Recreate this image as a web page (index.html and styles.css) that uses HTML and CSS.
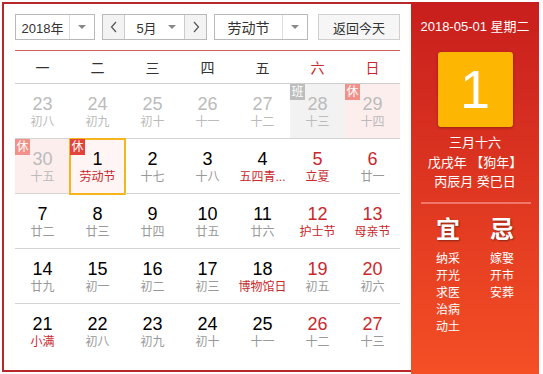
FILE: index.html
```html
<!DOCTYPE html>
<html lang="zh-CN">
<head>
  <meta charset="UTF-8">
  <title>万年历</title>
  <link rel="stylesheet" href="styles.css">
</head>
<body>
  <div class="calendar">
    <div class="main">
      <div class="toolbar">
        <div class="select year">
          <span class="value">2018年</span>
          <span class="arrow"></span>
        </div>
        <div class="select month">
          <span class="nav">
            <svg width="8" height="12" viewBox="0 0 8 12"><polyline points="6,1 1.5,6 6,11" fill="none" stroke="#555" stroke-width="1.2"/></svg>
          </span>
          <span class="value">5月</span>
          <span class="arrow plain"></span>
          <span class="nav next">
            <svg width="8" height="12" viewBox="0 0 8 12"><polyline points="2,1 6.5,6 2,11" fill="none" stroke="#555" stroke-width="1.2"/></svg>
          </span>
        </div>
        <div class="select holiday">
          <span class="value">劳动节</span>
          <span class="arrow"></span>
        </div>
        <button class="today">返回今天</button>
      </div>

      <div class="weekdays">
        <span>一</span><span>二</span><span>三</span><span>四</span><span>五</span>
        <span class="weekend">六</span><span class="weekend">日</span>
      </div>

      <div class="days">
        <div class="cell other"><span class="num">23</span><span class="lunar">初八</span></div>
        <div class="cell other"><span class="num">24</span><span class="lunar">初九</span></div>
        <div class="cell other"><span class="num">25</span><span class="lunar">初十</span></div>
        <div class="cell other"><span class="num">26</span><span class="lunar">十一</span></div>
        <div class="cell other"><span class="num">27</span><span class="lunar">十二</span></div>
        <div class="cell other work"><i class="badge">班</i><span class="num">28</span><span class="lunar">十三</span></div>
        <div class="cell other rest"><i class="badge">休</i><span class="num">29</span><span class="lunar">十四</span></div>

        <div class="cell other rest"><i class="badge">休</i><span class="num">30</span><span class="lunar">十五</span></div>
        <div class="cell rest current"><i class="badge">休</i><span class="num">1</span><span class="lunar fest">劳动节</span></div>
        <div class="cell"><span class="num">2</span><span class="lunar">十七</span></div>
        <div class="cell"><span class="num">3</span><span class="lunar">十八</span></div>
        <div class="cell"><span class="num">4</span><span class="lunar fest" title="五四青年节">五四青...</span></div>
        <div class="cell weekend"><span class="num">5</span><span class="lunar fest">立夏</span></div>
        <div class="cell weekend"><span class="num">6</span><span class="lunar">廿一</span></div>

        <div class="cell"><span class="num">7</span><span class="lunar">廿二</span></div>
        <div class="cell"><span class="num">8</span><span class="lunar">廿三</span></div>
        <div class="cell"><span class="num">9</span><span class="lunar">廿四</span></div>
        <div class="cell"><span class="num">10</span><span class="lunar">廿五</span></div>
        <div class="cell"><span class="num">11</span><span class="lunar">廿六</span></div>
        <div class="cell weekend"><span class="num">12</span><span class="lunar fest">护士节</span></div>
        <div class="cell weekend"><span class="num">13</span><span class="lunar fest">母亲节</span></div>

        <div class="cell"><span class="num">14</span><span class="lunar">廿九</span></div>
        <div class="cell"><span class="num">15</span><span class="lunar">初一</span></div>
        <div class="cell"><span class="num">16</span><span class="lunar">初二</span></div>
        <div class="cell"><span class="num">17</span><span class="lunar">初三</span></div>
        <div class="cell"><span class="num">18</span><span class="lunar fest">博物馆日</span></div>
        <div class="cell weekend"><span class="num">19</span><span class="lunar">初五</span></div>
        <div class="cell weekend"><span class="num">20</span><span class="lunar">初六</span></div>

        <div class="cell"><span class="num">21</span><span class="lunar fest">小满</span></div>
        <div class="cell"><span class="num">22</span><span class="lunar">初八</span></div>
        <div class="cell"><span class="num">23</span><span class="lunar">初九</span></div>
        <div class="cell"><span class="num">24</span><span class="lunar">初十</span></div>
        <div class="cell"><span class="num">25</span><span class="lunar">十一</span></div>
        <div class="cell weekend"><span class="num">26</span><span class="lunar">十二</span></div>
        <div class="cell weekend"><span class="num">27</span><span class="lunar">十三</span></div>
      </div>
    </div>

    <div class="side">
      <div class="date">2018-05-01 星期二</div>
      <div class="big-day">1</div>
      <div class="lunar-info">
        <div>三月十六</div>
        <div>戊戌年 【狗年】</div>
        <div>丙辰月 癸巳日</div>
      </div>
      <div class="divider"></div>
      <div class="almanac">
        <div class="col">
          <div class="head">宜</div>
          <div>纳采</div>
          <div>开光</div>
          <div>求医</div>
          <div>治病</div>
          <div>动土</div>
        </div>
        <div class="col">
          <div class="head">忌</div>
          <div>嫁娶</div>
          <div>开市</div>
          <div>安葬</div>
        </div>
      </div>
    </div>
  </div>
</body>
</html>
```

FILE: styles.css
```css
body {
  margin: 0;
  font-family: "Liberation Sans", "Noto Sans CJK SC", sans-serif;
  background: #fff;
}

.calendar {
  display: flex;
  margin: 2px 0 0 2px;
}

.main {
  width: 409px;
  height: 370px;
  box-sizing: border-box;
  border: 2px solid #b8282a;
  border-right: none;
  padding: 10px 11px 0;
}

/* toolbar */
.toolbar {
  display: flex;
  height: 26px;
}

.select {
  display: flex;
  align-items: center;
  height: 26px;
  box-sizing: border-box;
  border: 1px solid #b9b9b9;
  font-size: 13px;
  color: #333;
}

.select .value {
  flex: 1;
  text-align: center;
}

.select .arrow {
  width: 24px;
  height: 100%;
  border-left: 1px solid #ddd;
  display: flex;
  align-items: center;
  justify-content: center;
}

.select .arrow.plain {
  border-left: none;
}

.select .arrow::after {
  content: "";
  border-left: 4px solid transparent;
  border-right: 4px solid transparent;
  border-top: 4px solid #888;
}

.year {
  width: 80px;
}

.month {
  width: 105px;
  margin-left: 7px;
}

.month .nav {
  width: 21px;
  height: 100%;
  background: #f3f3f3;
  border-right: 1px solid #ccc;
  display: flex;
  align-items: center;
  justify-content: center;
}

.month .nav.next {
  border-right: none;
  border-left: 1px solid #ccc;
}

.month .value {
  padding-left: 8px;
}

.holiday {
  width: 94px;
  margin-left: 7px;
  font-size: 14px;
}

.today {
  width: 82px;
  height: 26px;
  margin-left: 10px;
  border: 1px solid #d0d0d0;
  background: #f6f6f6;
  font-family: inherit;
  font-size: 13px;
  color: #333;
  padding: 0;
}

/* weekday header */
.weekdays {
  display: grid;
  grid-template-columns: repeat(7, 55px);
  margin-top: 10px;
  height: 34px;
  box-sizing: border-box;
  border-top: 1px solid #d26262;
  border-bottom: 1px solid #cfcfcf;
  align-items: center;
  text-align: center;
  font-size: 14px;
  color: #333;
}

.weekdays .weekend {
  color: #c9282d;
}

/* day grid */
.days {
  display: grid;
  grid-template-columns: repeat(7, 55px);
}

.cell {
  position: relative;
  height: 55px;
  box-sizing: border-box;
  border-bottom: 1px solid #d4d4d4;
  padding: 10px 2px 0;
  text-align: center;
}

.cell:nth-last-child(-n+7) {
  border-bottom: none;
}

.num {
  display: block;
  font-size: 18px;
  line-height: 20px;
  color: #000;
}

.lunar {
  display: block;
  font-size: 12px;
  line-height: 16px;
  color: #999;
  white-space: nowrap;
}

.lunar.fest {
  color: #c9282d;
}

.weekend .num {
  color: #c9282d;
}

.other .num,
.other .lunar {
  color: #bbb;
}

.work {
  background: #f2f2f2;
}

.rest {
  background: #fdeeee;
}

.badge {
  position: absolute;
  top: 0;
  left: 0;
  width: 15px;
  height: 16px;
  font-style: normal;
  font-size: 12px;
  line-height: 16px;
  color: #fff;
  background: #f0918b;
}

.work .badge {
  background: #bdbdbd;
}

.current {
  background: #fef5f4;
  outline: 2px solid #f5b51c;
  outline-offset: -1px;
}

.current .badge {
  background: #e2433a;
}

/* side panel */
.side {
  width: 128px;
  height: 372px;
  background: linear-gradient(#c81e1d, #f44f25);
  color: #fff;
  text-align: center;
  padding-top: 17px;
  box-sizing: border-box;
}

.date {
  font-size: 13px;
  line-height: 16px;
}

.big-day {
  width: 75px;
  height: 75px;
  margin: 17px auto 0;
  background: #fdb602;
  border-radius: 3px;
  box-shadow: 0 1px 3px rgba(0,0,0,0.3);
  font-size: 54px;
  line-height: 75px;
}

.lunar-info {
  margin-top: 6px;
  font-size: 13px;
  line-height: 19.5px;
}

.divider {
  height: 2px;
  margin: 10px 8px 0 10px;
  background: #f2776b;
}

.almanac {
  display: grid;
  grid-template-columns: 50px 50px;
  gap: 4px;
  justify-content: center;
  margin-top: 11px;
  font-size: 12px;
  line-height: 17px;
}

.almanac .head {
  font-size: 24px;
  line-height: 30px;
  font-weight: bold;
  margin-bottom: 6px;
  text-shadow: 1px 1px 2px rgba(0,0,0,0.4);
}
```
